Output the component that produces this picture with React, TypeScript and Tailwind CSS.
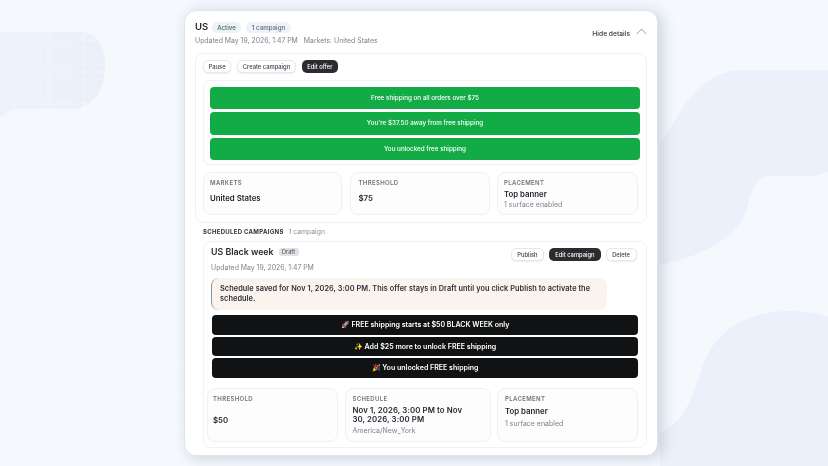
import React from "react";

function Btn({ children, dark, wide }: { children: React.ReactNode; dark?: boolean; wide?: boolean }) {
  return dark ? (
    <span className={`flex h-[13px] items-center rounded-[5px] bg-[#2b2b30] text-[5.8px] font-medium leading-none text-white ${wide ? "px-[6px]" : "px-[5.5px]"}`}>{children}</span>
  ) : (
    <span className={`flex h-[13px] items-center rounded-[5px] border border-[#e3e7ee] bg-white text-[5.8px] font-medium leading-none text-[#3a3f47] shadow-[0_1px_1px_rgba(30,50,90,0.08)] ${wide ? "px-[5.6px]" : "px-[4.6px]"}`}>{children}</span>
  );
}

function Stat({ label, value, sub, className }: { label: string; value: React.ReactNode; sub?: string; className: string }) {
  return (
    <div className={`rounded-[8px] border border-[#eef0f4] bg-[#fdfdfe] pt-[6px] ${className}`}>
      <div className="text-[6px] font-semibold uppercase leading-[8px] tracking-[0.35px] text-[#6e747d]">{label}</div>
      {value}
      {sub && <div className="text-[7px] leading-[10px] text-[#7d838c]">{sub}</div>}
    </div>
  );
}

const dots: [number, number][] = [];
for (let r = 0; r < 5; r++) for (let c = 0; c < 5; c++) dots.push([756 + c * 12, 82 + r * 12.5]);

export default function App() {
  return (
    <div className="relative h-[466px] w-[828px] overflow-hidden bg-[#f5f8fd] font-['Inter',sans-serif]">
      <svg className="absolute inset-0" width="828" height="466" viewBox="0 0 828 466" fill="none">
        <defs>
          <pattern id="st" width="2.4" height="2.4" patternUnits="userSpaceOnUse">
            <circle cx="1" cy="1" r="0.4" fill="#d3dcea" />
          </pattern>
          <linearGradient id="fade" x1="0" x2="1" y1="0" y2="0">
            <stop offset="0.5" stopColor="#fff" stopOpacity="0" />
            <stop offset="1" stopColor="#fff" stopOpacity="1" />
          </linearGradient>
          <mask id="m"><rect x="0" y="0" width="105" height="120" fill="url(#fade)" /></mask>
        </defs>
        <path d="M0 32H80C95 32 105 44 105 65C105 95 90 109 70 109H18C10 109 5 113 0 118Z" fill="#edf2fa" />
        <path d="M0 32H80C95 32 105 44 105 65C105 95 90 109 70 109H18C10 109 5 113 0 118Z" fill="url(#st)" mask="url(#m)" />
        <path d="M660 145C680 115 695 71 745 70H828V172C820 175 815 176 805 176H770C755 176 752 190 748 205C740 240 695 258 660 265Z" fill="#ebf1fa" />
        <path d="M660 432C690 420 695 385 705 360C720 325 755 311 790 311C805 311 818 313 828 317V466H660Z" fill="#ebf1fa" />
        {dots.map(([x, y]) => (
          <circle key={`${x}-${y}`} cx={x} cy={y} r="0.6" fill="#d6deea" />
        ))}
        <g stroke="#ffffff" strokeOpacity="0.4" strokeWidth="1">
          <path d="M48 0V466M84 0V466M120 0V466M156 0V466M0 40H184M0 72H184M0 104H184M0 136H184M0 168H184M0 200H184M0 232H184M0 264H184M0 296H184M0 328H184M0 366H184M0 398H184M0 430H184" />
        </g>
      </svg>

      <div className="relative ml-[184px] mt-[10px] h-[446px] w-[474px] rounded-[12px] border border-[#dfe4ec] bg-white px-[10px] pt-[10px] shadow-[4px_2px_14px_rgba(110,125,150,0.32)] will-change-transform">
        <div className="flex h-[32px] items-start justify-between">
          <div>
            <div className="flex h-[12px] items-center gap-[5px]">
              <span className="mr-[-1px] text-[9.5px] font-semibold leading-none text-[#22262c]">US</span>
              <span className="rounded-full bg-[#eef1f6] px-[5px] py-[2px] text-[6.2px] font-medium leading-[7px] text-[#3c6e52]">Active</span>
              <span className="rounded-full bg-[#eef3fb] px-[6px] py-[2px] text-[6.2px] font-medium leading-[7px] text-[#5c6672]">1 campaign</span>
            </div>
            <div className="mt-[3px] flex gap-[6px] text-[6.9px] leading-[10px] text-[#7d838c]">
              <span>Updated May 19, 2026, 1:47 PM</span>
              <span>Markets: United States</span>
            </div>
          </div>
          <div className="mt-[8px] flex items-start gap-[6px]">
            <span className="mt-[2px] text-[6.7px] font-medium leading-[7px] text-[#33373e]">Hide details</span>
            <svg className="mt-[-1px]" width="11" height="7" viewBox="0 0 11 7" fill="none"><path d="M0.8 6L5.5 1L10.2 6" stroke="#7f858d" strokeWidth="0.8" /></svg>
          </div>
        </div>

        <div className="h-[170px] w-[452px] rounded-[8px] border border-[#eff1f5] px-[7px] pt-[6px]">
          <div className="flex gap-[6px]">
            <Btn>Pause</Btn>
            <Btn>Create campaign</Btn>
            <Btn dark>Edit offer</Btn>
          </div>
          <div className="mt-[7px] flex h-[85px] w-[436px] flex-col gap-[3px] rounded-[7px] border border-[#f0f2f6] pl-[6px] pt-[5.5px]">
            {["Free shipping on all orders over $75", "You're $37.50 away from free shipping", "You unlocked free shipping"].map((t) => (
              <div key={t} className="flex h-[22.5px] w-[430px] shrink-0 items-center justify-center rounded-[4px] bg-[#12ab45] text-[6.3px] font-medium leading-none text-white">{t}</div>
            ))}
          </div>
          <div className="mt-[7px] flex gap-[7.5px]">
            <Stat className="h-[43px] w-[139px] pl-[6px]" label="Markets" value={<div className="mt-[6px] text-[7.8px] font-semibold leading-[10px] text-[#23272d]">United States</div>} />
            <Stat className="h-[43px] w-[140px] pl-[8px]" label="Threshold" value={<div className="mt-[6px] text-[7.8px] font-semibold leading-[10px] text-[#23272d]">$75</div>} />
            <Stat className="h-[43px] w-[141px] pl-[6px]" label="Placement" sub="1 surface enabled" value={<div className="mt-[2px] text-[7.8px] font-semibold leading-[11px] text-[#23272d]">Top banner</div>} />
          </div>
        </div>

        <div className="ml-[8px] mt-[4px] flex h-[10px] items-center gap-[5px]">
          <span className="text-[6px] font-bold uppercase leading-none tracking-[0.3px] text-[#2b2f35]">Scheduled campaigns</span>
          <span className="text-[6.8px] leading-none text-[#8b9198]">1 campaign</span>
        </div>

        <div className="ml-[8px] mt-[4px] h-[207px] w-[444px] rounded-[8px] border border-[#f0f2f6] pt-[3px]">
          <div className="flex h-[33px] items-start justify-between pl-[7px] pr-[9.5px]">
            <div>
              <div className="flex h-[14px] items-center gap-[5px]">
                <span className="text-[8.8px] font-semibold leading-none text-[#24282e]">US Black week</span>
                <span className="rounded-[3px] bg-[#dfe1e4] px-[3.5px] py-[1px] text-[5.6px] leading-[6px] text-[#4a4f56]">Draft</span>
              </div>
              <div className="mt-[4px] text-[6.9px] leading-[10px] text-[#7d838c]">Updated May 19, 2026, 1:47 PM</div>
            </div>
            <div className="mt-[3px] flex gap-[5px]">
              <Btn wide>Publish</Btn>
              <Btn wide dark>Edit campaign</Btn>
              <Btn wide>Delete</Btn>
            </div>
          </div>
          <div className="ml-[7px] h-[32px] w-[396px] rounded-[8px] border-l-[1.5px] border-[#8d9299] bg-[#fbf4ee] py-[6px] pl-[8px] pr-[8px] text-[7.35px] font-semibold leading-[10px] tracking-[0.06px] text-[#2c3036]">
            Schedule saved for Nov 1, 2026, 3:00 PM. This offer stays in Draft until you click Publish to activate the schedule.
          </div>
          <div className="ml-[8px] mt-[5px] flex flex-col gap-[2px]">
            {["🚀 FREE shipping starts at $50 BLACK WEEK only", "✨ Add $25 more to unlock FREE shipping", "🎉 You unlocked FREE shipping"].map((t) => (
              <div key={t} className="flex h-[19.5px] w-[426px] items-center justify-center rounded-[4px] bg-[#111213] text-[7.05px] font-semibold leading-none text-white">{t}</div>
            ))}
          </div>
          <div className="ml-[3px] mt-[10.5px] flex gap-[6.5px]">
            <Stat className="h-[54px] w-[131px] pl-[5px]" label="Threshold" value={<div className="mt-[12px] text-[7.8px] font-semibold leading-[10px] text-[#23272d]">$50</div>} />
            <Stat className="h-[54px] w-[146px] pl-[7px] pr-[15px]" label="Schedule" sub="America/New_York" value={<div className="mb-[2px] mt-[3px] text-[7.8px] font-semibold leading-[9px] tracking-[0.1px] text-[#23272d]">Nov 1, 2026, 3:00 PM to Nov 30, 2026, 3:00 PM</div>} />
            <Stat className="h-[54px] w-[141px] pl-[7px]" label="Placement" sub="1 surface enabled" value={<div className="mb-[2px] mt-[2.5px] text-[7.8px] font-semibold leading-[11px] text-[#23272d]">Top banner</div>} />
          </div>
        </div>
      </div>
    </div>
  );
}
